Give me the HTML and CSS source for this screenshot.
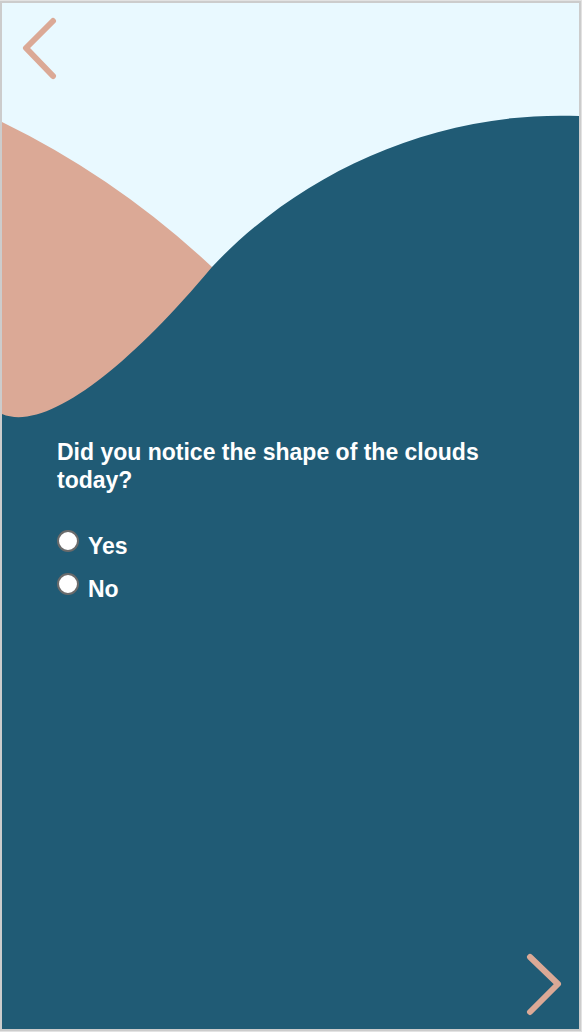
FILE: index.html
```html
<!DOCTYPE html>
<html lang="en">
<head>
  <meta charset="utf-8">
  <meta name="viewport" content="width=device-width, initial-scale=1">
  <title>Clouds</title>
  <link rel="stylesheet" href="styles.css">
</head>
<body>
  <form class="screen">
    <header class="hero">
      <svg class="hero-art" viewBox="2 3 577 426" aria-hidden="true">
        <path class="hill" d="M0 121 L2 122 Q117 178 212 267 L212 429 H0 Z"/>
        <path class="wave" d="M0 413 L2 414 C45 432 125 371 212 267 C296 177 430 110 579 116 L581 116 V431 H0 Z"/>
      </svg>
      <button class="nav nav-back" type="button" aria-label="Back">
        <svg width="36" height="64" viewBox="0 0 36 64" aria-hidden="true"><path class="chevron" d="M32 5 L5 32 L32 60"/></svg>
      </button>
    </header>
    <fieldset class="question">
      <legend class="prompt">Did you notice the shape of the clouds today?</legend>
      <label class="option" for="yes"><input class="radio" id="yes" type="radio" name="clouds" value="yes"><span>Yes</span></label>
      <label class="option" for="no"><input class="radio" id="no" type="radio" name="clouds" value="no"><span>No</span></label>
    </fieldset>
    <footer class="footer">
      <button class="nav" type="button" aria-label="Next">
        <svg width="36" height="64" viewBox="0 0 36 64" aria-hidden="true"><path class="chevron" d="M4 4 L32 31 L4 59"/></svg>
      </button>
    </footer>
  </form>
</body>
</html>
```
FILE: styles.css
```css
* { box-sizing: border-box; }

body {
  margin: 0;
  padding: 1px 1px 1px 0;
  background: #e2e2e2;
  font-family: "Helvetica Neue", Helvetica, "Liberation Sans", Arial, sans-serif;
}

.screen {
  display: flex;
  flex-direction: column;
  min-height: calc(100vh - 2px);
  border: 2px solid #cccccc;
  background: #205b75;
  color: #ffffff;
}

.hero {
  position: relative;
  background: #e9f9ff;
}

.hero-art {
  display: block;
  width: 100%;
  height: auto;
}

.hill { fill: #dba996; }
.wave { fill: #205b75; }

.nav {
  display: block;
  padding: 0;
  border: 0;
  background: none;
  cursor: pointer;
}

.nav svg { display: block; }

.nav-back {
  position: absolute;
  top: 13px;
  left: 19px;
}

.chevron {
  fill: none;
  stroke: #dba996;
  stroke-width: 6;
  stroke-linecap: round;
  stroke-linejoin: round;
}

.question {
  min-width: 0;
  margin: 9px 0 0;
  padding: 0 55px;
  border: 0;
  font-size: 23px;
  font-weight: bold;
  line-height: 28px;
}

.prompt {
  margin-bottom: 36px;
  padding: 0;
}

.option {
  display: flex;
  align-items: flex-start;
  gap: 9px;
  width: fit-content;
  margin-bottom: 13px;
}

.option span { padding-top: 2px; }

.radio {
  appearance: none;
  width: 22px;
  height: 22px;
  margin: 0;
  border: 2px solid #6b6b6b;
  border-radius: 50%;
  background: #ffffff;
}

.radio:checked { border: 6px solid #dba996; }

.footer {
  display: flex;
  justify-content: flex-end;
  margin-top: auto;
  padding: 0 17px 12px;
}
```
